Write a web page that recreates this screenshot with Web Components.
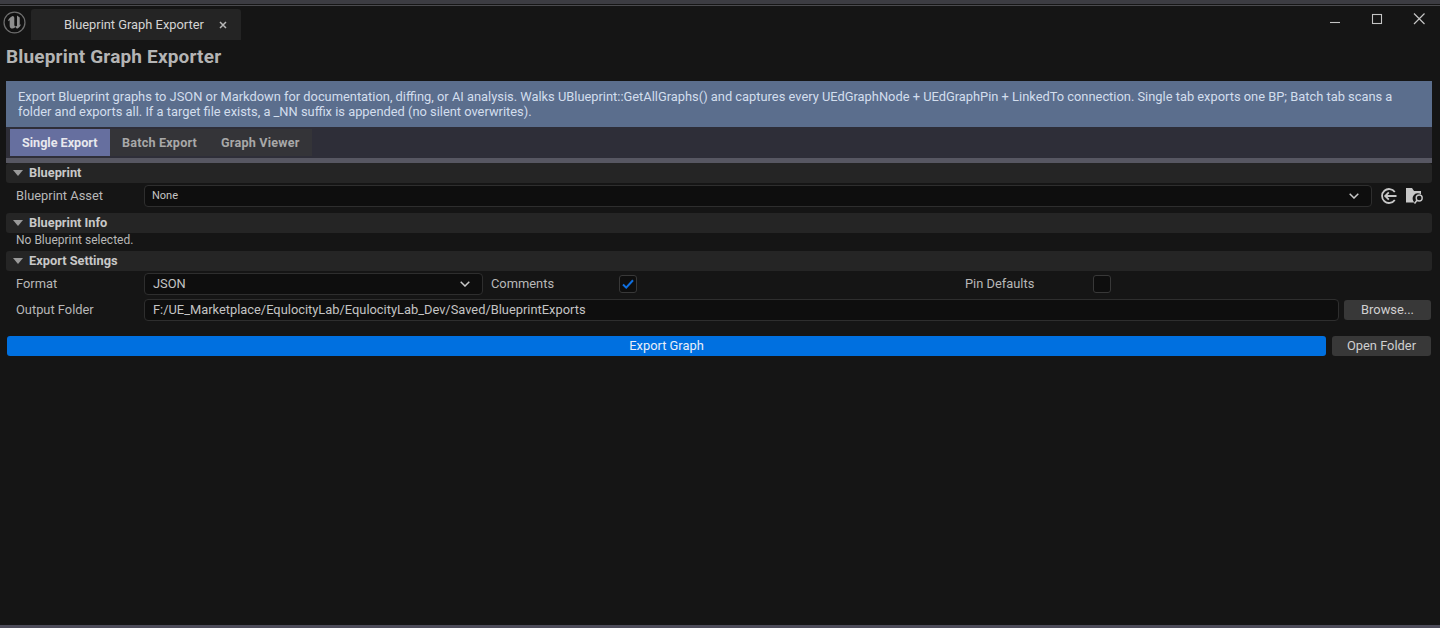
<!DOCTYPE html>
<html>
<head>
<style>
html,body{margin:0;padding:0;background:#151515;}
body{width:1440px;height:628px;overflow:hidden;font-family:Roboto,"Liberation Sans",sans-serif;}
</style>
</head>
<body>
<ue-window></ue-window>

<template id="windowTpl">
	<style>
		:host{display:flex;flex-direction:column;width:1440px;height:628px;background:#151515;color:#c0c0c0;font:12.87px/16px Roboto,"Liberation Sans",sans-serif;}
		.top{height:4px;background:#3c3c42;}
		.topline{height:1px;margin-top:1px;background:#4a4a4e;}
		.body{flex:1;display:flex;flex-direction:column;padding:0 8px 0 6px;min-height:0;}
		h1{margin:0;font:700 19px/24px Roboto,"Liberation Sans",sans-serif;color:#b4b4b4;height:24px;padding-top:5px;letter-spacing:.17px;}
		.banner{margin-top:12px;height:46px;box-sizing:border-box;background:#5b6e8d;color:#d3deee;padding:8px 12px 0;line-height:15px;}
		.bottom{height:3px;background:#4d4c5a;}
		.act{display:flex;gap:6px;padding:0 1px;margin-top:13px;}
		.info{height:13px;line-height:14px;padding-left:10px;font-size:12px;color:#b8b8b8;}
		.cap{width:128px;margin-left:8px;color:#b8b8b8;}
	</style>
	<div class="top"></div>
	<div class="topline"></div>
	<ue-titlebar></ue-titlebar>
	<div class="body">
		<h1>Blueprint Graph Exporter</h1>
		<div class="banner">Export Blueprint graphs to JSON or Markdown for documentation, diffing, or AI analysis. Walks UBlueprint::GetAllGraphs() and captures every UEdGraphNode + UEdGraphPin + LinkedTo connection. Single tab exports one BP; Batch tab scans a folder and exports all. If a target file exists, a _NN suffix is appended (no silent overwrites).</div>
		<ue-tabs></ue-tabs>
		<ue-section>Blueprint</ue-section>
		<ue-row label="Blueprint Asset" style="height:26px;padding-bottom:4px">
			<ue-combo small style="flex:1">None</ue-combo>
			<svg style="margin-left:9px" width="16" height="16" viewBox="0 0 16 16" fill="none" stroke="#c8c8c8" stroke-width="1.800"><path d="M13.800 4A7 7 0 1 0 13.800 12"/><path d="M15.500 8H4.400M7.800 4.400 4.200 8l3.600 3.600"/></svg>
			<svg style="margin:0 8px 0 9px" width="18" height="16" viewBox="0 0 18 16"><path d="M0 0h6l2 3h7V6.500A5 5 0 0 0 8.500 14.500H0z" fill="#c8c8c8"/><circle cx="13.200" cy="10" r="3" fill="none" stroke="#c8c8c8" stroke-width="1.400"/><path d="M11 12.200 8.500 15.500" stroke="#c8c8c8" stroke-width="1.500"/></svg>
		</ue-row>
		<ue-section>Blueprint Info</ue-section>
		<div class="info">No Blueprint selected.</div>
		<ue-section style="margin-top:5px">Export Settings</ue-section>
		<ue-row label="Format" style="height:26px">
			<ue-combo style="width:339px">JSON</ue-combo>
			<span class="cap">Comments</span>
			<ue-check checked></ue-check>
			<span class="cap" style="margin-left:328px">Pin Defaults</span>
			<ue-check></ue-check>
		</ue-row>
		<ue-row label="Output Folder" style="height:26px">
			<ue-field style="flex:1">F:/UE_Marketplace/EqulocityLab/EqulocityLab_Dev/Saved/BlueprintExports</ue-field>
			<ue-button style="width:87px;margin-left:5px;margin-right:1px">Browse...</ue-button>
		</ue-row>
		<div class="act">
			<ue-button primary style="flex:1">Export Graph</ue-button>
			<ue-button style="width:99px">Open Folder</ue-button>
		</div>
	</div>
	<div class="bottom"></div>
</template>

<template id="titlebarTpl">
	<style>
		:host{display:flex;align-items:flex-start;height:34px;position:relative;}
		.logo{margin:5px 0 0 3px;width:23px;height:23px;}
		.tab{margin:3px 0 0 5px;width:210px;height:31px;box-sizing:border-box;background:#242424;border-radius:3px 3px 0 0;display:flex;align-items:center;padding-left:33px;color:#d4d4d4;}
		.tab span{width:155px;}
		.ctl{margin-left:auto;display:flex;}
		.ctl svg{display:block;width:42px;height:20px;margin-top:3px;}
	</style>
	<svg class="logo" viewBox="0 0 22 22">
		<circle cx="11" cy="11" r="10" fill="#111" stroke="#6e6e6e" stroke-width="1.200"/>
		<path d="M9.200 4.800C6.800 5.800 5.200 7.600 4.800 9.800L6.400 8.800V14C6.400 15.800 7.600 16.800 9.200 16.800C10.400 16.800 11.200 16.200 11.800 15.400L13.400 17C15.200 16 16.600 14.600 17.200 12.600L16 13.400V6.200L13.400 4.400V14C12.600 14.800 11.800 15 11.200 14.400C10.800 14 10.800 13.600 10.800 13V6.800C10.800 5.600 10 4.800 9.200 4.800Z" fill="#8e8e8e"/>
	</svg>
	<div class="tab"><span>Blueprint Graph Exporter</span>
		<svg width="8" height="8" viewBox="0 0 8 8" stroke="#b8b8b8" stroke-width="1.500"><path d="M1 1l6 6M7 1 1 7"/></svg>
	</div>
	<div class="ctl">
		<svg viewBox="0 0 42 20" stroke="#c4c4c4" stroke-width="1.100" fill="none"><path d="M16 13.500H26"/></svg>
		<svg viewBox="0 0 42 20" stroke="#c4c4c4" stroke-width="1.100" fill="none"><rect x="16.500" y="5.500" width="9" height="9"/></svg>
		<svg viewBox="0 0 42 20" stroke="#c4c4c4" stroke-width="1.200" fill="none"><path d="M16 4.500 26.500 15M26.500 4.500 16 15"/></svg>
	</div>
</template>

<template id="tabsTpl">
	<style>
		:host{display:block;}
		.band{height:31px;background:#2e2e38;box-sizing:border-box;padding:2px 0 0 4px;display:flex;}
		.strip{display:flex;height:27px;background:#343438;font:700 12.600px/28px Roboto,"Liberation Sans",sans-serif;color:#a8a8a8;letter-spacing:.2px;}
		.strip div{padding:0 12px;}
		.strip .on{background:#666f9f;color:#e8e8ee;letter-spacing:0;width:100px;box-sizing:border-box;}
		.under{height:5px;background:#575762;}
	</style>
	<div class="band"><div class="strip"><div class="on">Single Export</div><div>Batch Export</div><div>Graph Viewer</div></div></div>
	<div class="under"></div>
</template>

<template id="sectionTpl">
	<style>
		:host{display:flex;align-items:center;height:20px;background:#252525;border-radius:3px;font:700 12.800px/20px Roboto,"Liberation Sans",sans-serif;color:#c8c8c8;}
		svg{margin:0 6px 0 7px;}
	</style>
	<svg width="10" height="6" viewBox="0 0 10 6"><path d="M0 0H10L5 6Z" fill="#9a9a9a"/></svg>
	<slot></slot>
</template>

<template id="rowTpl">
	<style>
		:host{display:flex;align-items:center;}
		.lbl{width:128px;padding-left:10px;flex:none;color:#b8b8b8;}
	</style>
	<div class="lbl"></div>
	<slot></slot>
</template>

<template id="comboTpl">
	<style>
		:host{display:flex;align-items:center;height:22px;box-sizing:border-box;background:#0e0e0e;border:1px solid #2e2e2e;border-radius:4px;padding:0 12px 0 8px;color:#c4c4c4;}
		:host([small]){font-size:11px;padding-left:7px;}
		span{flex:1;}
	</style>
	<span><slot></slot></span>
	<svg width="10" height="6" viewBox="0 0 10 6" fill="none" stroke="#c8c8c8" stroke-width="1.500"><path d="M.7.700 5 5 9.300.700"/></svg>
</template>

<template id="fieldTpl">
	<style>
		:host{display:flex;align-items:center;height:22px;box-sizing:border-box;background:#0e0e0e;border:1px solid #2e2e2e;border-radius:4px;padding:0 8px;color:#c4c4c4;}
	</style>
	<slot></slot>
</template>

<template id="checkTpl">
	<style>
		:host{display:flex;width:18px;height:18px;box-sizing:border-box;background:#0e0e0e;border:1px solid #383838;border-radius:3px;align-items:center;justify-content:center;flex:none;}
		svg{display:none;}
		:host([checked]) svg{display:block;}
	</style>
	<svg width="12" height="10" viewBox="0 0 12 10" fill="none" stroke="#0f6fe0" stroke-width="2"><path d="M1 5.500 4.200 8.600 11 1.200"/></svg>
</template>

<template id="buttonTpl">
	<style>
		:host{display:flex;align-items:center;justify-content:center;height:20px;border-radius:3px;background:#383838;color:#d0d0d0;box-sizing:border-box;}
		:host([primary]){background:#0070e0;color:#e8eef8;}
	</style>
	<slot></slot>
</template>

<script>
	// every element is the same: clone its template into an open shadow root
	function makeEl(tag, tplId, setup){
		class El extends HTMLElement{
			connectedCallback(){
				if(this.shadowRoot) return;
				this.attachShadow({mode:'open'});
				this.shadowRoot.append(document.getElementById(tplId).content.cloneNode(true));
				if(setup) setup(this);
			}
		}
		customElements.define(tag, El);
	}
	makeEl('ue-titlebar','titlebarTpl');
	makeEl('ue-tabs','tabsTpl');
	makeEl('ue-section','sectionTpl');
	makeEl('ue-row','rowTpl',(el)=>{ el.shadowRoot.querySelector('.lbl').textContent = el.getAttribute('label'); });
	makeEl('ue-combo','comboTpl');
	makeEl('ue-field','fieldTpl');
	makeEl('ue-check','checkTpl');
	makeEl('ue-button','buttonTpl');
	makeEl('ue-window','windowTpl');
</script>
</body>
</html>
